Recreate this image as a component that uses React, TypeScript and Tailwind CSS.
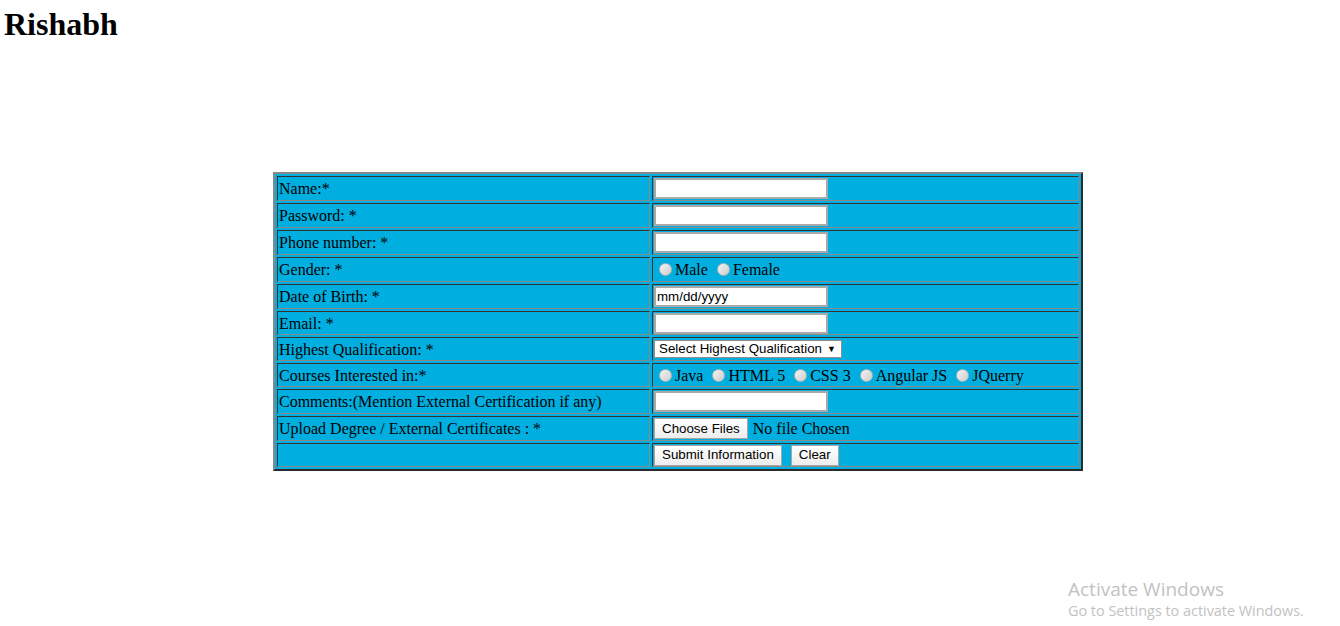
import React from 'react';

const serif = { fontFamily: '"Liberation Serif", "Times New Roman", serif' };

const Radio: React.FC = () => (
  <span className="inline-block w-[13px] h-[13px] rounded-full border border-[#b4b4b4] bg-gradient-to-br from-[#f4f4f4] to-[#cdcdcd] ml-[5px] mr-[3px] align-[-1px]"></span>
);

const TextInput: React.FC<{ value?: string }> = ({ value }) => (
  <div className="w-[174px] h-[21px] bg-white border-2 border-[#a9a9a9] px-[1px] flex items-center font-['Liberation_Sans',Arial,sans-serif] text-[13.33px] text-black leading-none">
    {value}
  </div>
);

const Btn: React.FC<{ label: string }> = ({ label }) => (
  <span className="inline-flex items-center h-[21px] px-[7px] bg-gradient-to-b from-white to-[#ededed] border border-[#a6a6a6] font-['Liberation_Sans',Arial,sans-serif] text-[13.33px] text-black leading-none">
    {label}
  </span>
);

const Gap: React.FC = () => <span className="w-[4px]"></span>;

const cell =
  'border border-t-[#333333] border-l-[#333333] border-b-[#8a8a8a] border-r-[#8a8a8a] p-[1px] align-middle';

export default function App() {
  const rows: { label: string; h: string; field: React.ReactNode }[] = [
    { label: 'Name:*', h: 'h-[25px]', field: <TextInput /> },
    { label: 'Password: *', h: 'h-[25px]', field: <TextInput /> },
    { label: 'Phone number: *', h: 'h-[25px]', field: <TextInput /> },
    {
      label: 'Gender: *',
      h: 'h-[25px]',
      field: (
        <div className="flex items-center">
          <Radio />Male<Gap /><Radio />Female
        </div>
      ),
    },
    { label: 'Date of Birth: *', h: 'h-[25px]', field: <TextInput value="mm/dd/yyyy" /> },
    { label: 'Email: *', h: 'h-[24px]', field: <div className="-my-[1px]"><TextInput /></div> },
    {
      label: 'Highest Qualification: *',
      h: 'h-[24px]',
      field: (
        <div className="w-[188px] h-[18px] bg-white border border-[#8f8f8f] flex items-center justify-between pl-[4px] pr-[5px] font-['Liberation_Sans',Arial,sans-serif] text-[13.33px] text-black leading-none">
          <span>Select Highest Qualification</span>
          <span className="text-[9px]">▼</span>
        </div>
      ),
    },
    {
      label: 'Courses Interested in:*',
      h: 'h-[24px]',
      field: (
        <div className="flex items-center">
          <Radio />Java<Gap />
          <Radio />HTML 5<Gap />
          <Radio />CSS 3<Gap />
          <Radio />Angular JS<Gap />
          <Radio />JQuerry
        </div>
      ),
    },
    { label: 'Comments:(Mention External Certification if any)', h: 'h-[25px]', field: <TextInput /> },
    {
      label: 'Upload Degree / External Certificates : *',
      h: 'h-[25px]',
      field: (
        <div className="flex items-center gap-[5px]">
          <Btn label="Choose Files" />
          <span>No file Chosen</span>
        </div>
      ),
    },
    {
      label: '',
      h: 'h-[24px]',
      field: (
        <div className="flex items-center gap-[9px] -my-[1px]">
          <Btn label="Submit Information" />
          <Btn label="Clear" />
        </div>
      ),
    },
  ];

  return (
    <div className="relative w-[1340px] h-[626px] bg-white overflow-hidden text-black" style={serif}>
      <h1 className="pl-[4px] pt-[6px] text-[32px] font-bold leading-[37px]">Rishabh</h1>

      <div className="mt-[129px] pl-[273px]">
        <table className="w-[810px] border-separate border-spacing-[2px] bg-[#00afe0] border-2 border-t-[#888888] border-l-[#888888] border-b-[#2b2b2b] border-r-[#2b2b2b] text-[16px] leading-[17px]">
          <tbody>
            {rows.map((r, i) => (
              <tr key={i}>
                <td className={`${cell} ${r.h} w-[373px]`}>{r.label}</td>
                <td className={`${cell} ${r.h}`}>{r.field}</td>
              </tr>
            ))}
          </tbody>
        </table>
      </div>

      <div className="absolute left-[1068px] top-[577px] text-[#c2c2c2] font-['Open_Sans',sans-serif]">
        <div className="text-[19px] leading-[24px]">Activate Windows</div>
        <div className="text-[14.4px] leading-[20px]">Go to Settings to activate Windows.</div>
      </div>
    </div>
  );
}
